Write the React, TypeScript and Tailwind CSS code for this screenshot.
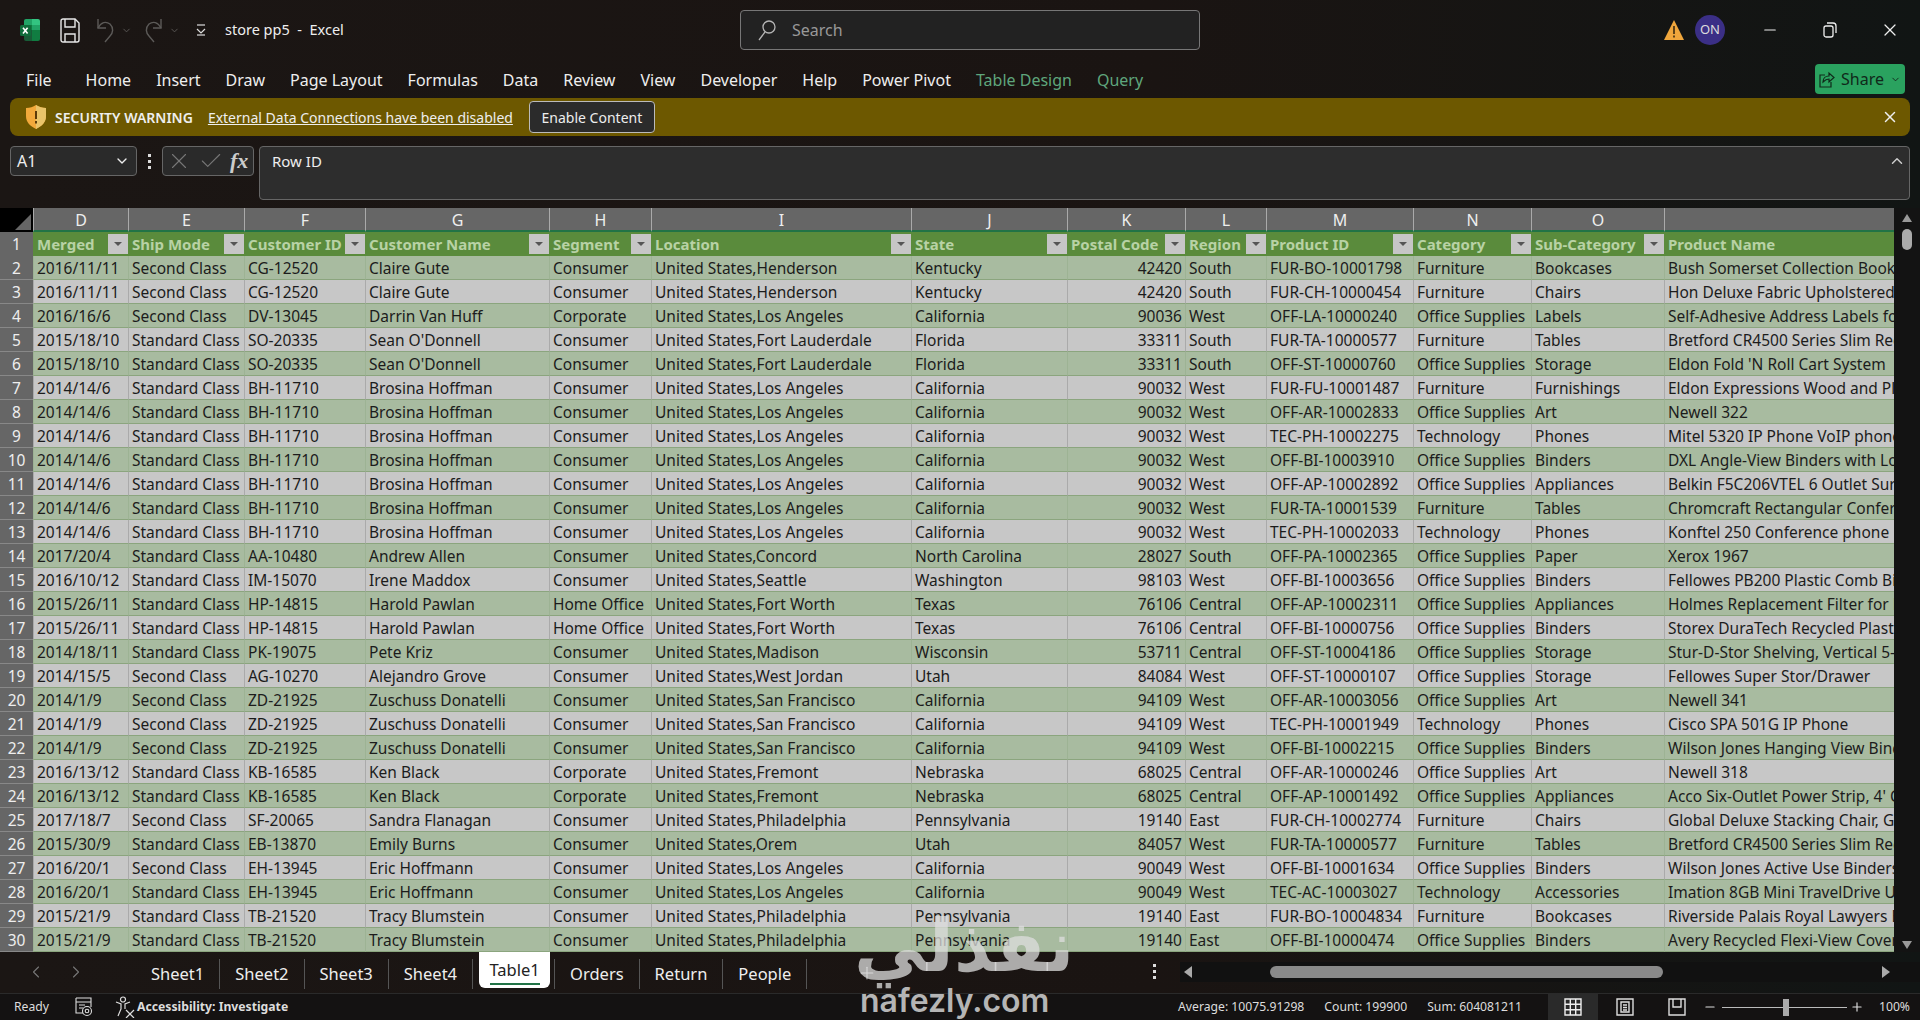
import { Fragment } from 'react';
import { X, ChevronDown, ChevronUp, ChevronLeft, ChevronRight, Check, Plus, Minus } from 'lucide-react';

const columns = ['D', 'E', 'F', 'G', 'H', 'I', 'J', 'K', 'L', 'M', 'N', 'O', ''];
const headers = ['Merged', 'Ship Mode', 'Customer ID', 'Customer Name', 'Segment', 'Location', 'State', 'Postal Code', 'Region', 'Product ID', 'Category', 'Sub-Category', 'Product Name'];

// one row per line, columns split on |
const raw = `2016/11/11|Second Class|CG-12520|Claire Gute|Consumer|United States,Henderson|Kentucky|42420|South|FUR-BO-10001798|Furniture|Bookcases|Bush Somerset Collection Bookcase
2016/11/11|Second Class|CG-12520|Claire Gute|Consumer|United States,Henderson|Kentucky|42420|South|FUR-CH-10000454|Furniture|Chairs|Hon Deluxe Fabric Upholstered Stacking
2016/16/6|Second Class|DV-13045|Darrin Van Huff|Corporate|United States,Los Angeles|California|90036|West|OFF-LA-10000240|Office Supplies|Labels|Self-Adhesive Address Labels for Typewriters
2015/18/10|Standard Class|SO-20335|Sean O'Donnell|Consumer|United States,Fort Lauderdale|Florida|33311|South|FUR-TA-10000577|Furniture|Tables|Bretford CR4500 Series Slim Rectangular
2015/18/10|Standard Class|SO-20335|Sean O'Donnell|Consumer|United States,Fort Lauderdale|Florida|33311|South|OFF-ST-10000760|Office Supplies|Storage|Eldon Fold 'N Roll Cart System
2014/14/6|Standard Class|BH-11710|Brosina Hoffman|Consumer|United States,Los Angeles|California|90032|West|FUR-FU-10001487|Furniture|Furnishings|Eldon Expressions Wood and Plastic
2014/14/6|Standard Class|BH-11710|Brosina Hoffman|Consumer|United States,Los Angeles|California|90032|West|OFF-AR-10002833|Office Supplies|Art|Newell 322
2014/14/6|Standard Class|BH-11710|Brosina Hoffman|Consumer|United States,Los Angeles|California|90032|West|TEC-PH-10002275|Technology|Phones|Mitel 5320 IP Phone VoIP phone
2014/14/6|Standard Class|BH-11710|Brosina Hoffman|Consumer|United States,Los Angeles|California|90032|West|OFF-BI-10003910|Office Supplies|Binders|DXL Angle-View Binders with Locking
2014/14/6|Standard Class|BH-11710|Brosina Hoffman|Consumer|United States,Los Angeles|California|90032|West|OFF-AP-10002892|Office Supplies|Appliances|Belkin F5C206VTEL 6 Outlet Surge
2014/14/6|Standard Class|BH-11710|Brosina Hoffman|Consumer|United States,Los Angeles|California|90032|West|FUR-TA-10001539|Furniture|Tables|Chromcraft Rectangular Conference
2014/14/6|Standard Class|BH-11710|Brosina Hoffman|Consumer|United States,Los Angeles|California|90032|West|TEC-PH-10002033|Technology|Phones|Konftel 250 Conference phone
2017/20/4|Standard Class|AA-10480|Andrew Allen|Consumer|United States,Concord|North Carolina|28027|South|OFF-PA-10002365|Office Supplies|Paper|Xerox 1967
2016/10/12|Standard Class|IM-15070|Irene Maddox|Consumer|United States,Seattle|Washington|98103|West|OFF-BI-10003656|Office Supplies|Binders|Fellowes PB200 Plastic Comb Binding
2015/26/11|Standard Class|HP-14815|Harold Pawlan|Home Office|United States,Fort Worth|Texas|76106|Central|OFF-AP-10002311|Office Supplies|Appliances|Holmes Replacement Filter for HEPA
2015/26/11|Standard Class|HP-14815|Harold Pawlan|Home Office|United States,Fort Worth|Texas|76106|Central|OFF-BI-10000756|Office Supplies|Binders|Storex DuraTech Recycled Plastic
2014/18/11|Standard Class|PK-19075|Pete Kriz|Consumer|United States,Madison|Wisconsin|53711|Central|OFF-ST-10004186|Office Supplies|Storage|Stur-D-Stor Shelving, Vertical 5-Shelf
2014/15/5|Second Class|AG-10270|Alejandro Grove|Consumer|United States,West Jordan|Utah|84084|West|OFF-ST-10000107|Office Supplies|Storage|Fellowes Super Stor/Drawer
2014/1/9|Second Class|ZD-21925|Zuschuss Donatelli|Consumer|United States,San Francisco|California|94109|West|OFF-AR-10003056|Office Supplies|Art|Newell 341
2014/1/9|Second Class|ZD-21925|Zuschuss Donatelli|Consumer|United States,San Francisco|California|94109|West|TEC-PH-10001949|Technology|Phones|Cisco SPA 501G IP Phone
2014/1/9|Second Class|ZD-21925|Zuschuss Donatelli|Consumer|United States,San Francisco|California|94109|West|OFF-BI-10002215|Office Supplies|Binders|Wilson Jones Hanging View Binder
2016/13/12|Standard Class|KB-16585|Ken Black|Corporate|United States,Fremont|Nebraska|68025|Central|OFF-AR-10000246|Office Supplies|Art|Newell 318
2016/13/12|Standard Class|KB-16585|Ken Black|Corporate|United States,Fremont|Nebraska|68025|Central|OFF-AP-10001492|Office Supplies|Appliances|Acco Six-Outlet Power Strip, 4' Cord
2017/18/7|Second Class|SF-20065|Sandra Flanagan|Consumer|United States,Philadelphia|Pennsylvania|19140|East|FUR-CH-10002774|Furniture|Chairs|Global Deluxe Stacking Chair, Gray
2015/30/9|Standard Class|EB-13870|Emily Burns|Consumer|United States,Orem|Utah|84057|West|FUR-TA-10000577|Furniture|Tables|Bretford CR4500 Series Slim Rectangular
2016/20/1|Second Class|EH-13945|Eric Hoffmann|Consumer|United States,Los Angeles|California|90049|West|OFF-BI-10001634|Office Supplies|Binders|Wilson Jones Active Use Binders
2016/20/1|Standard Class|EH-13945|Eric Hoffmann|Consumer|United States,Los Angeles|California|90049|West|TEC-AC-10003027|Technology|Accessories|Imation 8GB Mini TravelDrive USB
2015/21/9|Standard Class|TB-21520|Tracy Blumstein|Consumer|United States,Philadelphia|Pennsylvania|19140|East|FUR-BO-10004834|Furniture|Bookcases|Riverside Palais Royal Lawyers Bookcase
2015/21/9|Standard Class|TB-21520|Tracy Blumstein|Consumer|United States,Philadelphia|Pennsylvania|19140|East|OFF-BI-10000474|Office Supplies|Binders|Avery Recycled Flexi-View Covers`;
const rows = raw.split('\n').map(line => line.split('|'));

const ribbon = ['Home', 'Insert', 'Draw', 'Page Layout', 'Formulas', 'Data', 'Review', 'View', 'Developer', 'Help', 'Power Pivot'];
const sheetsBefore = ['Sheet1', 'Sheet2', 'Sheet3', 'Sheet4'];
const sheetsAfter = ['Orders', 'Return', 'People'];

function ExcelLogo() {
  return (
    <svg width="20" height="22" viewBox="0 0 20 22">
      <path d="M4 2a2 2 0 0 1 2-2h6v6H4z" fill="#21a366" />
      <path d="M12 0h6a2 2 0 0 1 2 2v4h-8z" fill="#33c481" />
      <path d="M4 6h8v5H4z" fill="#107c41" />
      <path d="M12 6h8v5h-8z" fill="#21a366" />
      <path d="M4 11h8v11H6a2 2 0 0 1-2-2z" fill="#185c37" />
      <path d="M12 11h8v9a2 2 0 0 1-2 2h-6z" fill="#107c41" />
      <rect x="0" y="6" width="11" height="11" rx="1.5" fill="#0f6b3a" />
      <path d="M3 8.8l4.600 5.800M7.600 8.800L3 14.600" stroke="#fff" strokeWidth="1.6" />
    </svg>
  );
}

function SaveIcon() {
  return (
    <svg width="20" height="25" viewBox="0 0 20 25" fill="none" stroke="#e8e8e8" strokeWidth="1.4">
      <path d="M1 3a2 2 0 0 1 2-2h12l4 4v17a2 2 0 0 1-2 2H3a2 2 0 0 1-2-2z" />
      <path d="M5 1v8h10V1M5 24v-8h10v8" />
    </svg>
  );
}

function UndoIcon({ flip }: { flip?: boolean }) {
  return (
    <svg width="19" height="25" viewBox="0 0 19 25" fill="none" stroke="#5c5a58" strokeWidth="1.4" className={flip ? '-scale-x-100' : ''}>
      <path d="M2 1v9h8" />
      <path d="M2 10c3-6 8-7 12-4 4 4 3 9 0 12l-5 6" />
    </svg>
  );
}

function QuickDropIcon() {
  return (
    <svg width="10" height="12" viewBox="0 0 10 12" fill="none" stroke="#ddd" strokeWidth="1.2">
      <path d="M1 1h8" />
      <path d="M1 5l4 4 4-4" />
      <path d="M1 11h8" />
    </svg>
  );
}

function SearchIcon() {
  return (
    <svg width="20" height="24" viewBox="0 0 20 24" fill="none" stroke="#b5b5b5" strokeWidth="1.3">
      <circle cx="12" cy="9" r="6" />
      <path d="M8 14l-6 8" />
    </svg>
  );
}

function AlertIcon() {
  return (
    <svg width="20" height="20" viewBox="0 0 20 20">
      <path d="M10 0L20 20H0z" fill="#f0a63c" />
      <path d="M10 6v8M10 15.500v2" stroke="#3a2a10" strokeWidth="1.6" />
    </svg>
  );
}

function ShieldIcon() {
  return (
    <svg width="20" height="24" viewBox="0 0 20 24">
      <path d="M10 0c3 2 6 3 10 3v8c0 6-4 10-10 13C4 21 0 17 0 11V3c4 0 7-1 10-3z" fill="#f2a93b" />
      <path d="M10 0c3 2 6 3 10 3v8c0 6-4 10-10 13z" fill="#e9c46a" />
      <path d="M10 6v8M10 16v2.500" stroke="#5b3a08" strokeWidth="2" />
    </svg>
  );
}

function ShareIcon() {
  return (
    <svg width="16" height="18" viewBox="0 0 16 18" fill="none" stroke="#10291a" strokeWidth="1.2">
      <path d="M6 5H1v12h11v-5" />
      <path d="M4 12c0-4 3-6 6-6V3l5 4.500-5 4.500V9c-2 0-4 1-6 3z" />
    </svg>
  );
}

function RestoreIcon() {
  return (
    <svg width="14" height="16" viewBox="0 0 14 16" fill="none" stroke="#eee" strokeWidth="1.3">
      <rect x="1" y="4" width="9" height="11" rx="2" />
      <path d="M4 1h6a3 3 0 0 1 3 3v7" />
    </svg>
  );
}

function FilterButton() {
  return (
    <span className="flex h-5 w-5 shrink-0 items-center justify-center bg-[#c6c6c6]">
      <span className="h-0 w-0 border-x-[4px] border-t-[4px] border-x-transparent border-t-[#555]" />
    </span>
  );
}

function SheetTab({ name }: { name: string }) {
  return <span className="flex h-[30px] items-center border-r border-[#555] px-[15px]">{name}</span>;
}

function MacroIcon() {
  return (
    <svg width="18" height="20" viewBox="0 0 18 20" fill="none" stroke="#ddd" strokeWidth="1.1">
      <path d="M1 1h15v9M1 1v15h7M1 5h15M4 8h6M4 11h4" />
      <circle cx="12" cy="14" r="4.500" />
      <circle cx="12" cy="14" r="1.800" />
    </svg>
  );
}

function AccessibilityIcon() {
  return (
    <svg width="20" height="22" viewBox="0 0 20 22" fill="none" stroke="#ddd" strokeWidth="1.2">
      <circle cx="8" cy="3.500" r="2.500" />
      <path d="M1 6l5 2v5l-3 7M15 6l-5 2v5M11 14l8 8M19 14l-8 8" />
    </svg>
  );
}

function NormalViewIcon() {
  return (
    <svg width="18" height="18" viewBox="0 0 18 18" fill="none" stroke="#eee" strokeWidth="1.4">
      <path d="M1 1h16v16H1zM6.300 1v16M11.700 1v16M1 6.300h16M1 11.700h16" />
    </svg>
  );
}

function PageViewIcon() {
  return (
    <svg width="18" height="18" viewBox="0 0 18 18" fill="none" stroke="#ddd" strokeWidth="1.4">
      <path d="M1 1h16v16H1zM5 4h8v10H5zM7 7h4M7 9.500h4M7 12h4" />
    </svg>
  );
}

function BreakViewIcon() {
  return (
    <svg width="18" height="18" viewBox="0 0 18 18" fill="none" stroke="#ddd" strokeWidth="1.4">
      <path d="M1 1h16v16H1zM5 1v8h8V1" />
    </svg>
  );
}

export default function App() {
  return (
    <div className="relative flex h-[1020px] w-[1920px] flex-col overflow-hidden bg-linear-to-r from-[#1b1614] via-[#1a1412] via-60% to-[#111514] font-['Noto_Sans',sans-serif] text-[#eee]">
      {/* Title bar */}
      <div className="flex h-[60px] items-center">
        <div className="ml-5"><ExcelLogo /></div>
        <div className="ml-[20px]"><SaveIcon /></div>
        <div className="ml-[16px]"><UndoIcon /></div>
        <ChevronDown size={11} className="ml-[6px] text-[#5c5a58]" />
        <div className="ml-[12px]"><UndoIcon flip /></div>
        <ChevronDown size={11} className="ml-[6px] text-[#5c5a58]" />
        <div className="ml-[16px]"><QuickDropIcon /></div>
        <span className="ml-[19px] text-[14.5px]">store pp5&nbsp; -&nbsp; Excel</span>
        <div className="absolute left-[740px] top-[10px] flex h-[40px] w-[460px] items-center rounded border border-[#777] bg-[#222] pl-4 text-[16px] text-[#999]">
          <SearchIcon />
          <span className="ml-[15px]">Search</span>
        </div>
        <div className="ml-auto flex items-center">
          <AlertIcon />
          <span className="ml-[11px] flex h-[30px] w-[30px] items-center justify-center rounded-full bg-[#3b2f86] text-[13px] text-[#ddd]">ON</span>
          <Minus size={18} className="ml-[36px]" strokeWidth={1.5} />
          <span className="ml-[44px]"><RestoreIcon /></span>
          <X size={20} className="ml-[43px] mr-[20px]" strokeWidth={1.5} />
        </div>
      </div>

      {/* Ribbon tabs */}
      <div className="flex h-[38px] items-start text-[16px]">
        <div className="mt-[5px] flex h-[30px] items-center gap-[25px]">
          <span className="ml-[26px] mr-[9px]">File</span>
          {ribbon.map(name => <span key={name}>{name}</span>)}
          <span className="text-[#5fa67c]">Table Design</span>
          <span className="text-[#5fa67c]">Query</span>
        </div>
        <div className="ml-auto mr-[15px] mt-[4px] flex h-[30px] w-[90px] items-center justify-center gap-[6px] rounded bg-[#2aa25f] text-[#10291a]">
          <ShareIcon />
          <span>Share</span>
          <ChevronDown size={11} />
        </div>
      </div>

      {/* Security warning */}
      <div className="mx-[10px] flex h-[38px] items-center rounded-lg bg-[#6d5800] pl-[16px] text-[14px]">
        <ShieldIcon />
        <span className="ml-[9px] font-semibold">SECURITY WARNING</span>
        <span className="ml-[15px] underline">External Data Connections have been disabled</span>
        <span className="ml-[16px] flex h-[32px] w-[126px] items-center justify-center rounded border border-[#bbb] bg-[#2b2b2b]">Enable Content</span>
        <X size={18} className="ml-auto mr-[11px]" />
      </div>

      {/* Formula bar */}
      <div className="mx-[10px] mt-[10px] flex h-[54px] items-start">
        <div className="flex h-[30px] w-[127px] items-center justify-between rounded border border-[#666] bg-[#2a2a2a] pl-[6px] pr-[6px] text-[16px]">
          A1
          <ChevronDown size={16} />
        </div>
        <span className="ml-[10px] flex h-[30px] w-[5px] flex-col items-center justify-center gap-[3px]">
          <span className="h-[3px] w-[3px] bg-[#ddd]" />
          <span className="h-[3px] w-[3px] bg-[#ddd]" />
          <span className="h-[3px] w-[3px] bg-[#ddd]" />
        </span>
        <div className="ml-[10px] flex h-[30px] w-[92px] items-center gap-[6px] rounded border border-[#666] bg-[#2a2a2a] pl-[3px]">
          <X size={26} className="text-[#777]" strokeWidth={1} />
          <Check size={26} className="text-[#777]" strokeWidth={1} />
          <span className="font-['Liberation_Serif',serif] text-[22px] font-bold italic leading-none text-[#ccc]">fx</span>
        </div>
        <div className="ml-[5px] flex h-[54px] flex-1 items-start justify-between rounded border border-[#666] bg-[#2d2d2d] pl-[12px] pr-[3px] pt-[3px] text-[15px]">
          Row ID
          <ChevronUp size={18} className="mt-[2px] text-[#ccc]" />
        </div>
      </div>

      {/* Sheet */}
      <div className="mt-2 flex h-[744px]">
        <div className="grid w-[1894px] grid-cols-[33px_95px_116px_121px_184px_102px_260px_156px_118px_81px_147px_118px_133px_230px] auto-rows-[24px] overflow-hidden text-[15.5px] text-[#1c1c1c]">
          <div className="flex items-end justify-end bg-black p-[2px]">
            <span className="h-0 w-0 border-b-[16px] border-l-[16px] border-b-[#666] border-l-transparent" />
          </div>
          {columns.map((col, i) => (
            <div key={i} className="flex items-center justify-center border-b-2 border-l border-b-[#217346] border-l-[#aaa] bg-[#666] pt-[2px] text-[16px] text-[#eee]">{col}</div>
          ))}
          <div className="flex items-center justify-center bg-[#666] pt-[2px] text-[#eee]">1</div>
          {headers.map(name => (
            <div key={name} className="flex items-center justify-between overflow-hidden bg-[#5a8b3c] pl-1 text-[15px] font-bold text-[#b8d2a5] whitespace-nowrap">
              <span>{name}</span>
              {name !== 'Product Name' && <FilterButton />}
            </div>
          ))}
          {rows.map((row, r) => (
            <Fragment key={r}>
              <div className="flex items-center justify-center border-b border-[#888] bg-[#666] pt-[2px] text-[#eee]">{r + 2}</div>
              {row.map((cell, c) => (
                <div
                  key={c}
                  className={`flex items-center overflow-hidden border-b border-b-[#8ba57e] pl-[3px] pt-[2px] whitespace-nowrap ${c === 7 ? 'justify-end pr-[3px]' : ''} ${r % 2 === 0 ? 'border-l border-l-[#9db394] bg-[#a8bba0]' : 'border-l border-l-[#aaa] bg-[#c7c7c7]'}`}
                >
                  {cell}
                </div>
              ))}
            </Fragment>
          ))}
        </div>
        <div className="flex flex-1 flex-col items-center bg-[#131313]">
          <span className="mt-[6px] h-0 w-0 border-x-[5px] border-b-[8px] border-x-transparent border-b-[#999]" />
          <span className="mt-[7px] h-[21px] w-[10px] rounded-full bg-[#aaa]" />
          <span className="mt-auto mb-[3px] h-0 w-0 border-x-[5px] border-t-[8px] border-x-transparent border-t-[#999]" />
        </div>
      </div>

      {/* Sheet tabs */}
      <div className="flex h-[41px] items-start text-[16.5px]">
        <ChevronLeft size={20} className="ml-[26px] mt-[10px] text-[#777]" strokeWidth={1.3} />
        <ChevronRight size={20} className="ml-[20px] mt-[10px] text-[#777]" strokeWidth={1.3} />
        <div className="ml-[50px] mt-[7px] flex items-center">
          {sheetsBefore.map(name => <SheetTab key={name} name={name} />)}
        </div>
        <div className="ml-[6px] flex h-[36px] w-[71px] flex-col items-center justify-center rounded-b-md bg-white pt-[1px] text-[#222]">
          <span className="leading-[26px]">Table1</span>
          <span className="h-[2px] w-[50px] bg-[#217346]" />
        </div>
        <div className="ml-[4px] mt-[7px] flex items-center border-l border-[#555]">
          {sheetsAfter.map(name => <SheetTab key={name} name={name} />)}
        </div>
        <Plus size={20} className="ml-[50px] mt-[11px] text-[#ccc]" strokeWidth={1.3} />
        <span className="ml-[276px] mt-[12px] flex flex-col gap-[3px]">
          <span className="h-[3px] w-[3px] bg-[#ddd]" />
          <span className="h-[3px] w-[3px] bg-[#ddd]" />
          <span className="h-[3px] w-[3px] bg-[#ddd]" />
        </span>
        <div className="ml-[24px] mt-[10px] flex h-[20px] flex-1 items-center bg-[#111] pl-[4px] pr-[30px]">
          <span className="h-0 w-0 border-y-[6px] border-r-[8px] border-y-transparent border-r-[#aaa]" />
          <span className="ml-[78px] h-[12px] w-[393px] rounded-full bg-[#8a8a8a]" />
          <span className="ml-auto h-0 w-0 border-y-[6px] border-l-[8px] border-y-transparent border-l-[#aaa]" />
        </div>
      </div>

      {/* Status bar */}
      <div className="flex h-[27px] items-center border-t border-[#2a2a2a] bg-[#141212] text-[12.2px] text-[#ddd]">
        <span className="ml-[14px]">Ready</span>
        <span className="ml-[26px]"><MacroIcon /></span>
        <span className="ml-[22px]"><AccessibilityIcon /></span>
        <span className="ml-[2px] font-bold">Accessibility: Investigate</span>
        <span className="ml-auto">Average: 10075.91298</span>
        <span className="ml-[20px]">Count: 199900</span>
        <span className="ml-[20px]">Sum: 604081211</span>
        <span className="ml-[26px] flex h-full w-[50px] items-center justify-center bg-[#2a2a2a]"><NormalViewIcon /></span>
        <span className="ml-[18px]"><PageViewIcon /></span>
        <span className="ml-[34px]"><BreakViewIcon /></span>
        <Minus size={14} className="ml-[17px]" />
        <span className="relative ml-[5px] h-px w-[125px] bg-[#bbb]">
          <span className="absolute left-[61px] top-[-8px] h-[17px] w-[6px] bg-[#aaa]" />
        </span>
        <Plus size={14} className="ml-[3px]" />
        <span className="ml-[15px] mr-[10px]">100%</span>
      </div>

      {/* Watermark */}
      <span className="pointer-events-none absolute left-[854px] top-[896px] font-['DejaVu_Sans',sans-serif] text-[72px] font-bold leading-[100px] text-[#ddd]/75" dir="rtl">نفذلي</span>
      <span className="pointer-events-none absolute left-[860px] top-[981px] font-['Inter',sans-serif] text-[32px] font-semibold leading-[40px] text-[#b5b5b5]">nafezly.com</span>
    </div>
  );
}
